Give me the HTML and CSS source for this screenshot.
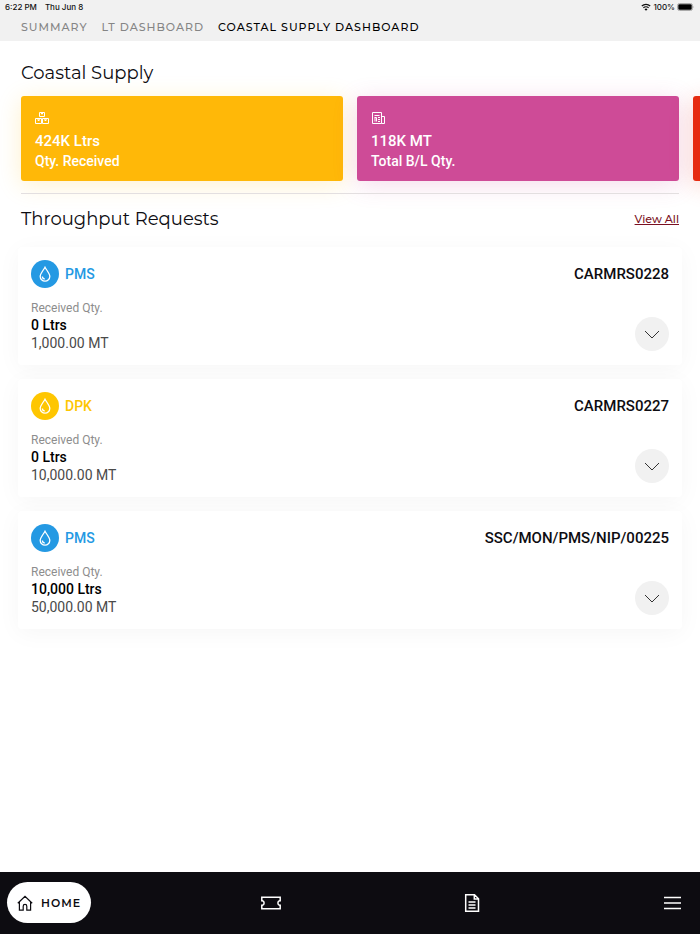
FILE: index.html
```html
<!DOCTYPE html>
<html lang="en">
<head>
    <meta charset="UTF-8">
    <meta name="viewport" content="width=device-width, initial-scale=1.0">
    <title>Coastal Supply Dashboard</title>
    <link rel="stylesheet" href="styles.css">
</head>
<body>

<!-- Icons shared by the request cards -->
<svg class="symbols" aria-hidden="true">
    <symbol id="drop" viewBox="0 0 28 28">
        <path d="M14 7.2C12.6 10 9.2 13.6 9.2 16.4a4.8 4.8 0 0 0 9.6 0C18.8 13.6 15.4 10 14 7.2Z"/>
        <path d="M11.4 16.5c0 1.5 1 2.4 2.3 2.5"/>
    </symbol>
    <symbol id="chevron" viewBox="0 0 16 16">
        <path d="M1 5l7 7 7-7"/>
    </symbol>
</svg>

<header>
    <div class="status-bar">
        <span>6:22 PM</span>
        <span>Thu Jun 8</span>
        <span class="status-right">
            <svg class="wifi" viewBox="0 0 10 8" aria-hidden="true">
                <path d="M.8 3A6 6 0 0 1 9.2 3M2.4 4.8a3.7 3.7 0 0 1 5.2 0"/>
                <path class="solid" d="M5 7.8L3.5 6.2a2.1 2.1 0 0 1 3 0Z"/>
            </svg>
            100%
            <svg class="battery" viewBox="0 0 18 8" aria-hidden="true">
                <rect class="shell" x=".5" y=".5" width="15" height="7" rx="2"/>
                <rect x="1.3" y="1.3" width="13.4" height="5.4" rx="1.2"/>
                <path class="tip" d="M16.5 2.8q1.2 1.2 0 2.4Z"/>
            </svg>
        </span>
    </div>
    <nav class="tabs">
        <a href="#">SUMMARY</a>
        <a href="#">LT DASHBOARD</a>
        <a href="#" class="active">COASTAL SUPPLY DASHBOARD</a>
    </nav>
</header>

<main>
    <h1>Coastal Supply</h1>

    <!-- Summary cards, the last one runs off the screen -->
    <div class="summary">
        <div class="summary-card yellow">
            <svg viewBox="0 0 14 14" aria-hidden="true">
                <path d="M4.5 1.5h5v4h-5ZM.5 7.5h6v5h-6ZM7.5 7.5h6v5h-6Z"/>
                <path d="M6.5 2v1h1V2M3 8v1.5h1.2V8M9.9 8v1.5h1.2V8"/>
            </svg>
            <p class="amount">424K Ltrs</p>
            <p>Qty. Received</p>
        </div>
        <div class="summary-card pink">
            <svg viewBox="0 0 14 14" aria-hidden="true">
                <path d="M1.5 1.5h9v11h-9ZM10.5 5.5h3v7h-3"/>
                <path d="M3.5 4.5h5M4 6.5v4M3.5 6.5h2v4M7 6.5h2M7 8.5h2M7 10.5h2"/>
            </svg>
            <p class="amount">118K MT</p>
            <p>Total B/L Qty.</p>
        </div>
        <div class="summary-card red"></div>
    </div>

    <section class="requests">
        <div class="requests-head">
            <h2>Throughput Requests</h2>
            <a href="#">View All</a>
        </div>

        <article class="request pms">
            <div class="request-top">
                <svg class="badge" aria-hidden="true"><use href="#drop"/></svg>
                <h3>PMS</h3>
                <span class="code">CARMRS0228</span>
            </div>
            <div class="request-bottom">
                <div>
                    <p class="label">Received Qty.</p>
                    <p class="litres">0 Ltrs</p>
                    <p class="tonnes">1,000.00 MT</p>
                </div>
                <button aria-label="Show details"><svg aria-hidden="true"><use href="#chevron"/></svg></button>
            </div>
        </article>

        <article class="request dpk">
            <div class="request-top">
                <svg class="badge" aria-hidden="true"><use href="#drop"/></svg>
                <h3>DPK</h3>
                <span class="code">CARMRS0227</span>
            </div>
            <div class="request-bottom">
                <div>
                    <p class="label">Received Qty.</p>
                    <p class="litres">0 Ltrs</p>
                    <p class="tonnes">10,000.00 MT</p>
                </div>
                <button aria-label="Show details"><svg aria-hidden="true"><use href="#chevron"/></svg></button>
            </div>
        </article>

        <article class="request pms">
            <div class="request-top">
                <svg class="badge" aria-hidden="true"><use href="#drop"/></svg>
                <h3>PMS</h3>
                <span class="code">SSC/MON/PMS/NIP/00225</span>
            </div>
            <div class="request-bottom">
                <div>
                    <p class="label">Received Qty.</p>
                    <p class="litres">10,000 Ltrs</p>
                    <p class="tonnes">50,000.00 MT</p>
                </div>
                <button aria-label="Show details"><svg aria-hidden="true"><use href="#chevron"/></svg></button>
            </div>
        </article>
    </section>
</main>

<nav class="bottom-nav">
    <a href="#" class="home">
        <svg viewBox="0 0 16 16" aria-hidden="true">
            <path d="M.8 8.2L8 1.4l7.2 6.8M2.4 7v8.2h3.8v-4a1.8 1.8 0 0 1 3.6 0v4h3.8V7"/>
        </svg>
        HOME
    </a>
    <a href="#" aria-label="Tickets">
        <svg viewBox="0 0 20 20" aria-hidden="true">
            <path d="M.8 4.3h18.4v3.4h-.6a2.4 2.4 0 0 0 0 4.6h.6v3.4H.8v-3.4h.6a2.4 2.4 0 0 0 0-4.6H.8Z"/>
        </svg>
    </a>
    <a href="#" aria-label="Documents">
        <svg viewBox="0 0 20 20" aria-hidden="true">
            <path d="M3.7 1.7h8.8l4 4v12.6H3.7ZM12.3 1.7v4.2h4.2M6.5 9h7M6.5 12h7M6.5 15h7"/>
        </svg>
    </a>
    <a href="#" aria-label="Menu">
        <svg viewBox="0 0 20 20" aria-hidden="true">
            <path d="M2 4.5h17M2 10h17M2 15.5h17"/>
        </svg>
    </a>
</nav>

</body>
</html>
```

FILE: styles.css
```css
* {
    box-sizing: border-box;
}

body {
    display: flex;
    flex-direction: column;
    min-height: 100vh;
    margin: 0;
    font-family: Roboto, Arial, sans-serif;
    background-color: #fff;
    color: #0d0c11;
}

h1, h2, h3, p {
    margin: 0;
}

a {
    color: inherit;
    text-decoration: none;
}

svg {
    fill: none;
    stroke: currentColor;
    flex-shrink: 0;
}

.symbols {
    position: absolute;
    width: 0;
    height: 0;
}

/* Header */
header {
    background-color: #f1f1f1;
}

.status-bar {
    display: flex;
    gap: 8px;
    padding: 0 5px;
    font: 500 8px/14px Inter, sans-serif;
    color: #111;
}

.status-right {
    display: flex;
    align-items: center;
    gap: 2px;
    margin-left: auto;
}

.wifi {
    width: 10px;
    height: 8px;
    stroke-width: 1.2;
}

.wifi .solid {
    fill: #000;
    stroke: none;
}

.battery {
    width: 18px;
    height: 8px;
    fill: #000;
    stroke: none;
}

.battery .shell {
    fill: none;
    stroke: #aaa;
}

.battery .tip {
    fill: #aaa;
}

.tabs {
    display: flex;
    gap: 14px;
    padding: 0 21px;
    font: 500 11px/27px Montserrat, Inter, sans-serif;
    letter-spacing: 1px;
    color: #858585;
}

.tabs .active {
    color: #000;
}

/* Summary cards */
main {
    flex: 1;
    padding: 20px 0;
    overflow: hidden;
}

h1, h2 {
    font: 400 18px/24px Montserrat, Inter, sans-serif;
}

h1 {
    padding: 0 21px;
}

.summary {
    display: flex;
    gap: 14px;
    padding: 11px 21px 12px;
}

.summary-card {
    flex: 0 0 calc(50% - 7px);
    min-height: 85px;
    padding: 15px 14px 10px;
    border-radius: 3px;
    color: #fff;
    font-size: 14px;
    font-weight: 500;
    line-height: 20px;
}

.summary-card svg {
    display: block;
    width: 14px;
    height: 14px;
    margin-bottom: 6px;
}

.summary-card .amount {
    font-size: 15px;
}

.yellow {
    background-color: #ffb808;
    box-shadow: 0 4px 24px rgba(255, 184, 8, 0.2);
}

.pink {
    background-color: #ce4b97;
    box-shadow: 0 4px 24px rgba(206, 75, 151, 0.2);
}

.red {
    background-color: #e62b10;
    box-shadow: 0 4px 24px rgba(230, 43, 16, 0.2);
}

/* Throughput requests */
.requests {
    display: flex;
    flex-direction: column;
    gap: 14px;
    padding: 0 18px;
}

.requests-head {
    display: flex;
    justify-content: space-between;
    align-items: center;
    margin: 0 3px;
    padding: 13px 0 2px;
    border-top: 1px solid #e3dfe0;
}

.requests-head a {
    font: 500 11px/16px Montserrat, Inter, sans-serif;
    color: #7a1022;
    text-decoration: underline;
}

.request {
    padding: 13px;
    border-radius: 4px;
    background-color: #fff;
    box-shadow: 0 4px 24px rgba(0, 0, 0, 0.04);
}

.request-top {
    display: flex;
    align-items: center;
    gap: 6px;
}

.badge {
    width: 28px;
    height: 28px;
    border-radius: 50%;
    color: #fff;
    stroke-width: 1.3;
}

.pms h3 {
    color: #2499e3;
}

.pms .badge {
    background-color: #2499e3;
}

.dpk h3 {
    color: #fec601;
}

.dpk .badge {
    background-color: #fec601;
}

.request h3 {
    font-size: 14px;
    font-weight: 500;
}

.code {
    margin-left: auto;
    font-size: 15px;
    font-weight: 500;
}

.request-bottom {
    display: flex;
    justify-content: space-between;
    align-items: flex-end;
    padding-top: 12px;
}

.request-bottom p {
    font-size: 14px;
    line-height: 18px;
}

.request-bottom .label {
    font-size: 12px;
    line-height: 16px;
    color: #8d8d8d;
}

.request-bottom .litres {
    font-weight: 500;
    color: #000;
}

.request-bottom .tonnes {
    color: #4a4a4a;
}

.request button {
    display: flex;
    justify-content: center;
    align-items: center;
    width: 34px;
    height: 34px;
    margin-bottom: 1px;
    padding: 0;
    border: none;
    border-radius: 50%;
    background-color: #f1f1f1;
    color: #333;
    cursor: pointer;
}

.request button svg {
    width: 16px;
    height: 16px;
}

/* Bottom navigation */
.bottom-nav {
    display: flex;
    justify-content: space-between;
    align-items: center;
    padding: 10px 8px 11px 7px;
    background-color: #0d0c11;
    color: #fff;
}

.bottom-nav a {
    padding: 0 10px;
}

.bottom-nav svg {
    display: block;
    width: 20px;
    height: 20px;
    stroke-width: 1.5;
}

.bottom-nav .home {
    display: flex;
    align-items: center;
    gap: 8px;
    height: 41px;
    border-radius: 21px;
    background-color: #fff;
    color: #0d0c11;
    font: 600 11px/16px Montserrat, Inter, sans-serif;
    letter-spacing: 1px;
}

.bottom-nav .home svg {
    width: 16px;
    height: 16px;
    stroke-width: 1.2;
}
```
